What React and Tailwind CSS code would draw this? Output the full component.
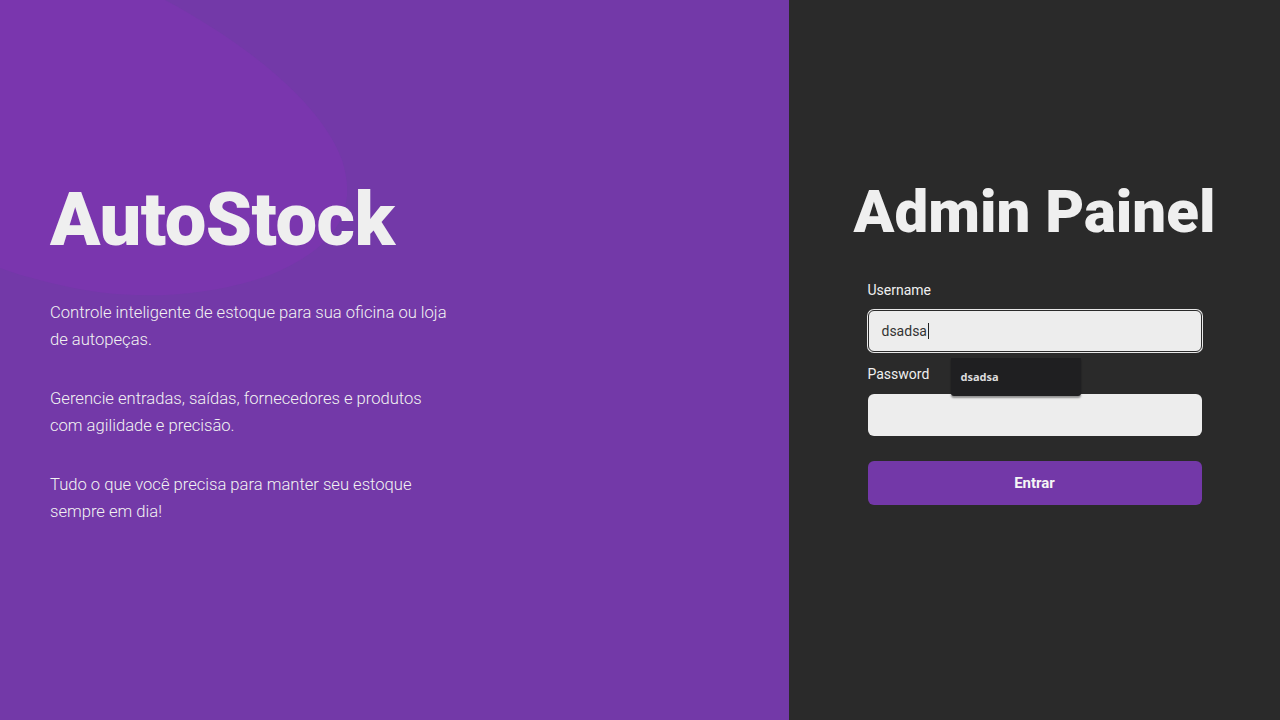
export default function App() {
  return (
    <div className="flex h-[720px] w-[1280px] overflow-hidden font-['Roboto','Liberation_Sans',sans-serif]">
      <section className="relative flex w-[789px] flex-col justify-center bg-[#7339a8] px-[50px] pb-[20px]">
        <svg className="absolute left-0 top-0" width="400" height="320" viewBox="0 0 400 320">
          <path
            d="M0 0 L165 0 C240 40 320 100 342 160 C360 215 330 250 270 275 C200 300 120 300 60 285 C30 278 10 272 0 268 Z"
            fill="#7a36ae"
          />
        </svg>
        <div className="relative">
          <h1 className="mt-[7px] text-[74px] font-black leading-none tracking-[-0.5px] text-[#efefef]">AutoStock</h1>
          <div className="mt-[42px] max-w-[400px] text-[16.6px] font-light leading-[27px] text-[#f2f2f2]">
            <p className="mb-8">Controle inteligente de estoque para sua oficina ou loja de autopeças.</p>
            <p className="mb-8">Gerencie entradas, saídas, fornecedores e produtos com agilidade e precisão.</p>
            <p>Tudo o que você precisa para manter seu estoque sempre em dia!</p>
          </div>
        </div>
      </section>

      <section className="flex flex-1 flex-col items-center bg-[#2a2a2a] pt-[182px]">
        <h2 className="text-[60px] font-black leading-none text-[#efefef]">Admin Painel</h2>
        <form className="mt-[40px] flex w-[334px] flex-col">
          <label className="mb-[12px] text-[14px] leading-[16px] text-[#f0f0f0]">Username</label>
          <div className="relative">
            <div className="flex h-[42px] items-center rounded-[6px] border border-[#2a2a2a] bg-[#ededed] px-[13px] text-[14px] text-[#333] ring-1 ring-[#e8e8e8]">
              dsadsa
              <span className="ml-[1px] h-[16px] w-[1px] bg-[#222]" />
            </div>
            <div className="absolute left-[83px] top-[48px] z-10 flex h-[38px] w-[130px] items-center rounded-b-[3px] bg-[#1f1f21] px-[10px] text-[11px] font-bold text-[#dcdcdc] shadow-[0_2px_2px_rgba(0,0,0,0.4)] font-['Noto_Sans','Liberation_Sans',sans-serif]">
              dsadsa
            </div>
          </div>
          <label className="mb-[12px] mt-[14px] text-[14px] leading-[16px] text-[#f0f0f0]">Password</label>
          <div className="h-[42px] rounded-[6px] bg-[#ededed]" />
          <button
            type="button"
            className="mt-[25px] h-[44px] rounded-[6px] bg-[#7338a8] text-[15px] font-bold text-[#f5f5f5]"
          >
            Entrar
          </button>
        </form>
      </section>
    </div>
  );
}
